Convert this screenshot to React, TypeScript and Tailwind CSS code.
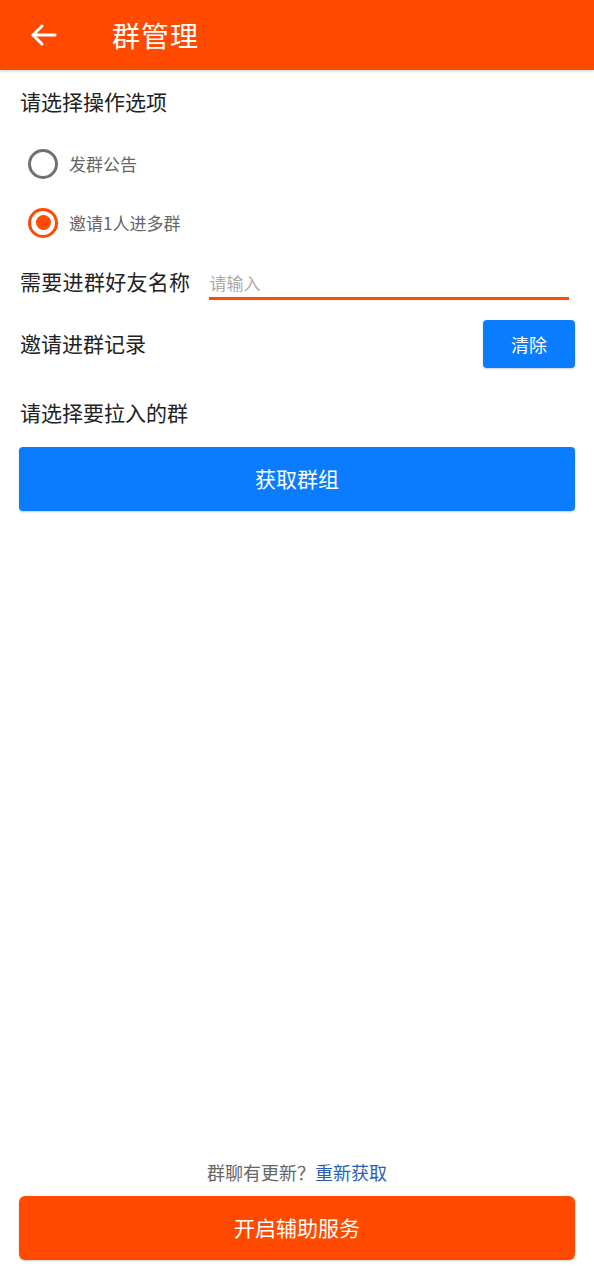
import React from "react";

export default function App() {
  const font = { fontFamily: '"Noto Sans CJK SC", "Noto Sans", sans-serif' };
  return (
    <div style={font} className="w-[594px] h-[1280px] bg-white flex flex-col relative">
      <div className="h-[70px] bg-[#ff4a00] flex items-center shrink-0 shadow-[0_1px_3px_rgba(0,0,0,0.2)] z-10">
        <div className="w-[112px] flex items-center pl-[30px]">
          <svg width="28" height="24" viewBox="0 0 28 24" fill="none" stroke="white" strokeWidth="3" strokeLinecap="round" strokeLinejoin="round">
            <path d="M25 12H3" />
            <path d="M12 3L3 12L12 21" />
          </svg>
        </div>
        <div className="text-white text-[28px] leading-none tracking-[1px]">群管理</div>
      </div>

      <div className="px-[19px] flex flex-col">
        <div className="h-[64px] flex items-center pl-[1px] text-[21px] text-[#222]">请选择操作选项</div>

        <div className="h-[59px] flex items-center pl-[9px]">
          <div className="w-[30px] h-[30px] rounded-full border-[3px] border-[#707070]" />
          <span className="ml-[11px] text-[17px] text-[#666]">发群公告</span>
        </div>
        <div className="h-[59px] flex items-center pl-[9px]">
          <div className="w-[30px] h-[30px] rounded-full border-[3px] border-[#ff4a00] flex items-center justify-center">
            <div className="w-[15px] h-[15px] rounded-full bg-[#ff4a00]" />
          </div>
          <span className="ml-[11px] text-[17px] text-[#666]">邀请1人进多群</span>
        </div>

        <div className="h-[60px] flex items-center pl-[1px]">
          <span className="text-[21px] text-[#222] whitespace-nowrap tracking-[0.3px]">需要进群好友名称</span>
          <div className="ml-[19px] mr-[6px] flex-1 h-[36px] border-b-[3px] border-[#ff4a00] flex items-center pt-[4px]">
            <span className="text-[17px] text-[#aaa] leading-none">请输入</span>
          </div>
        </div>

        <div className="h-[64px] flex items-center justify-between pl-[1px]">
          <span className="text-[21px] text-[#222]">邀请进群记录</span>
          <div className="w-[92px] h-[48px] rounded-[4px] bg-[#0a7cff] flex items-center justify-center text-white text-[18px] shadow-[0_1px_2px_rgba(0,0,0,0.2)]">清除</div>
        </div>

        <div className="h-[64px] mt-[5px] flex items-center pl-[1px] text-[21px] text-[#222]">请选择要拉入的群</div>

        <div className="mt-[2px] h-[64px] rounded-[4px] bg-[#0a7cff] flex items-center justify-center text-white text-[21px] shadow-[0_1px_2px_rgba(0,0,0,0.2)]">获取群组</div>
      </div>

      <div className="flex-1" />

      <div className="px-[19px] pb-[20px] flex flex-col">
        <div className="h-[40px] flex items-center justify-center text-[18px]">
          <span className="text-[#666]">群聊有更新？</span>
          <span className="text-[#2d5cb4]">重新获取</span>
        </div>
        <div className="mt-[4px] h-[64px] rounded-[6px] bg-[#ff4a00] flex items-center justify-center text-white text-[21px] shadow-[0_1px_2px_rgba(0,0,0,0.2)]">开启辅助服务</div>
      </div>
    </div>
  );
}
